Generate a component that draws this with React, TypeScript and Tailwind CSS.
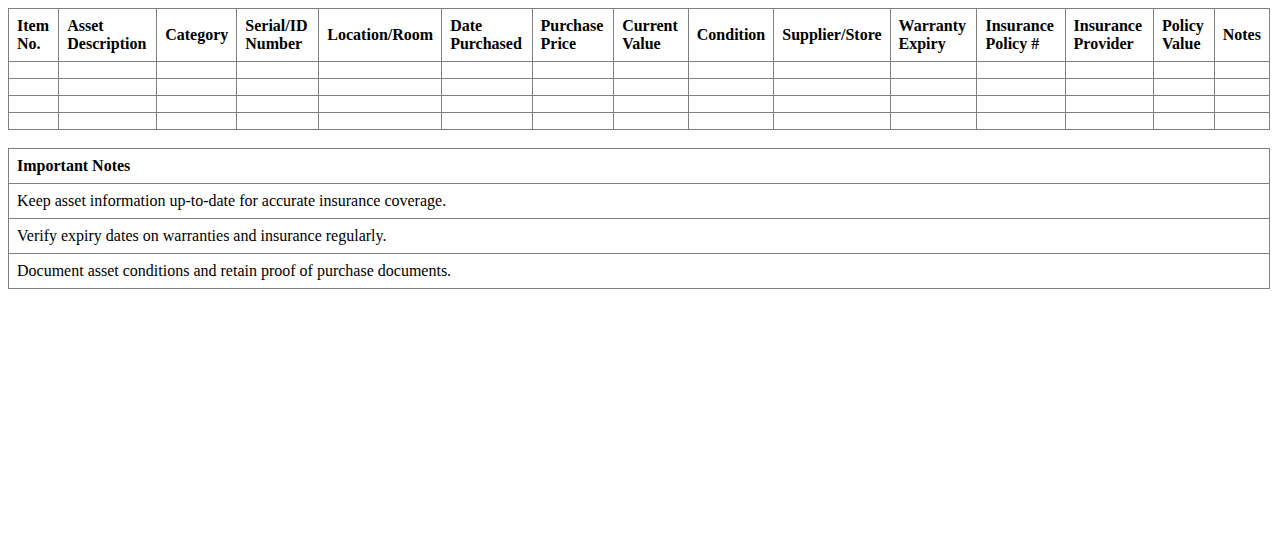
const headers = [
  "Item No.",
  "Asset Description",
  "Category",
  "Serial/ID Number",
  "Location/Room",
  "Date Purchased",
  "Purchase Price",
  "Current Value",
  "Condition",
  "Supplier/Store",
  "Warranty Expiry",
  "Insurance Policy #",
  "Insurance Provider",
  "Policy Value",
  "Notes",
];

const notes = [
  "Keep asset information up-to-date for accurate insurance coverage.",
  "Verify expiry dates on warranties and insurance regularly.",
  "Document asset conditions and retain proof of purchase documents.",
];

export default function App() {
  return (
    <div className="min-h-screen bg-white p-2 text-[16px] leading-[18px] text-black [font-family:'Liberation_Serif','Times_New_Roman',serif]">
      <table className="w-full border-collapse">
        <thead>
          <tr>
            {headers.map((h) => (
              <th key={h} className="border border-[#808080] p-2 text-left font-bold">
                {h}
              </th>
            ))}
          </tr>
        </thead>
        <tbody>
          {[0, 1, 2, 3].map((r) => (
            <tr key={r}>
              {headers.map((h) => (
                <td key={h} className="border border-[#808080] p-2"></td>
              ))}
            </tr>
          ))}
        </tbody>
      </table>

      <table className="mt-[18px] w-full border-collapse">
        <thead>
          <tr>
            <th className="border border-[#808080] p-2 text-left font-bold">Important Notes</th>
          </tr>
        </thead>
        <tbody>
          {notes.map((n) => (
            <tr key={n}>
              <td className="border border-[#808080] p-2">{n}</td>
            </tr>
          ))}
        </tbody>
      </table>
    </div>
  );
}
